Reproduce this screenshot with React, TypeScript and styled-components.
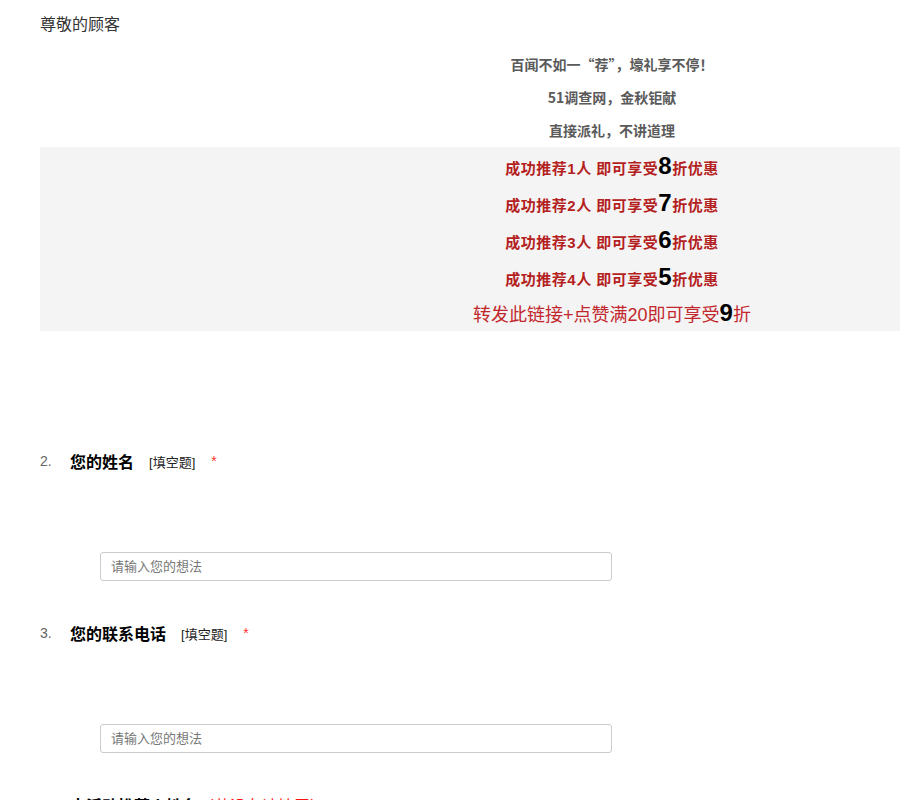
import React from "react";
import styled, { createGlobalStyle } from "styled-components";

const GlobalStyle = createGlobalStyle`
  html, body {
    margin: 0;
    padding: 0;
    background: #fff;
    overflow: hidden;
  }
  body {
    font-family: "Liberation Sans", "Noto Sans CJK SC", sans-serif;
    color: #333;
  }
`;

type Question = {
  index: number;
  title: string;
  note?: string;
};

const questions: Question[] = [
  { index: 2, title: "您的姓名" },
  { index: 3, title: "您的联系电话" },
  { index: 4, title: "本活动推荐人姓名", note: "（若没有请填无）" },
];

const offers = [
  { people: 1, discount: 8 },
  { people: 2, discount: 7 },
  { people: 3, discount: 6 },
  { people: 4, discount: 5 },
];

const Page = styled.div`
  width: 1144px;
  padding: 13px 0 0 40px;
`;

const Greeting = styled.div`
  font-size: 16px;
  line-height: 24px;
  color: #333;
  margin-bottom: 11px;
`;

const Intro = styled.div`
  text-align: center;
  font-family: "Noto Sans CJK SC", "Liberation Sans", sans-serif;
`;

const IntroLine = styled.p`
  margin: 0;
  font-size: 14px;
  line-height: 33px;
  font-weight: bold;
  color: #5a5a5a;
`;

const Band = styled.div`
  background: #f4f4f4;
  text-align: center;
`;

const OfferLine = styled.p<{ $large?: boolean }>`
  margin: 0;
  height: ${(p) => (p.$large ? "36px" : "37px")};
  line-height: ${(p) => (p.$large ? "36px" : "37px")};
  font-size: ${(p) => (p.$large ? "18px" : "15px")};
  font-weight: ${(p) => (p.$large ? "normal" : "bold")};
  letter-spacing: ${(p) => (p.$large ? "0" : "0.5px")};
  color: ${(p) => (p.$large ? "#c2272d" : "#b41f1f")};
`;

const Digit = styled.span`
  font-family: "Liberation Sans", sans-serif;
  font-size: 24px;
  font-weight: bold;
  color: #000;
`;

const Questions = styled.div`
  padding-top: 118px;
  display: flex;
  flex-direction: column;
  gap: 40px;
`;

const QuestionBlock = styled.div`
  display: flex;
  flex-direction: column;
  gap: 79px;
`;

const TitleRow = styled.div`
  display: flex;
  align-items: center;
  height: 24px;
`;

const Num = styled.span`
  width: 30px;
  font-size: 14px;
  color: #666;
`;

const Title = styled.span`
  font-size: 16px;
  font-weight: bold;
  color: #000;
`;

const Note = styled.span`
  font-size: 16px;
  color: #f11;
`;

const Kind = styled.span`
  font-size: 13px;
  color: #222;
  margin-left: 15px;
`;

const Required = styled.span`
  font-size: 14px;
  color: #f33;
  margin-left: 16px;
`;

const InputWrap = styled.div`
  padding-left: 60px;
`;

const TextInput = styled.input`
  box-sizing: border-box;
  width: 512px;
  height: 29px;
  border: 1px solid #ccc;
  border-radius: 3px;
  padding: 0 10px;
  font-family: "Liberation Sans", "Noto Sans CJK SC", sans-serif;
  font-size: 13px;
  color: #333;
  outline: none;
  &::placeholder {
    color: #777;
  }
`;

function App() {
  return (
    <Page>
      <GlobalStyle />
      <Greeting>尊敬的顾客</Greeting>
      <Intro lang="zh-CN">
        <IntroLine>百闻不如一“荐”，壕礼享不停！</IntroLine>
        <IntroLine>51调查网，金秋钜献</IntroLine>
        <IntroLine>直接派礼，不讲道理</IntroLine>
      </Intro>
      <Band>
        {offers.map((offer) => (
          <OfferLine key={offer.people}>
            成功推荐{offer.people}人 即可享受<Digit>{offer.discount}</Digit>折优惠
          </OfferLine>
        ))}
        <OfferLine $large>
          转发此链接+点赞满20即可享受<Digit>9</Digit>折
        </OfferLine>
      </Band>
      <Questions>
        {questions.map((q) => (
          <QuestionBlock key={q.index}>
            <TitleRow>
              <Num>{q.index}.</Num>
              <Title>{q.title}</Title>
              {q.note && <Note>{q.note}</Note>}
              <Kind>[填空题]</Kind>
              <Required>*</Required>
            </TitleRow>
            <InputWrap>
              <TextInput placeholder="请输入您的想法" />
            </InputWrap>
          </QuestionBlock>
        ))}
      </Questions>
    </Page>
  );
}

export default App;
